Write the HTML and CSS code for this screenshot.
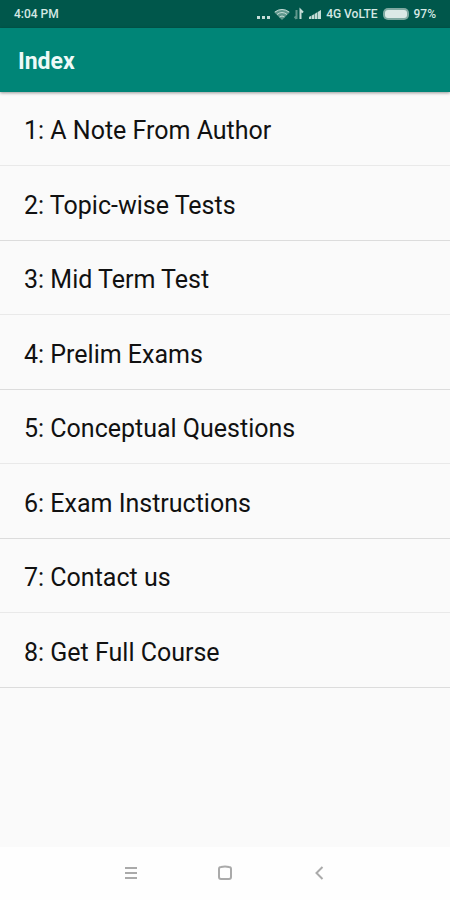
FILE: index.html
```html
<!DOCTYPE html>
<html lang="en">
<head>
    <meta charset="UTF-8">
    <meta name="viewport" content="width=device-width, initial-scale=1.0">
    <title>Index</title>
    <link rel="stylesheet" href="styles.css">
</head>
<body>
    <div class="status-bar">
        <span class="time">4:04 PM</span>
        <div class="status-icons">
            <svg class="dots" width="14" height="14" viewBox="0 0 14 14">
                <path d="M1 9h3v3H1zM6 9h3v3H6zM11 9h3v3h-3z"/>
            </svg>
            <svg class="wifi" width="16" height="14" viewBox="0 0 16 14">
                <path class="fan" d="M0 5Q8-1 16 5L8 13z"/>
                <path class="waves" d="M1 5q7-5 14 0M3 7.500q5-4 10 0M5.500 10q2.500-2 5 0"/>
            </svg>
            <svg class="data" width="10" height="14" viewBox="0 0 10 14">
                <path class="down" d="M2.500 3v9M2.500 12L0.500 9.500"/>
                <path class="up" d="M6.500 12V3L9 5.500"/>
            </svg>
            <svg class="signal" width="14" height="14" viewBox="0 0 14 14">
                <path class="wedge" d="M1 12V10L13 3v9z"/>
                <path d="M1 12V10l2-1v3zM4 12V8.500l2-1V12zM7 12V7l2-1.500V12zM10 12V5l3-2v9z"/>
            </svg>
            <span class="network">4G VoLTE</span>
            <svg class="battery" width="28" height="14" viewBox="0 0 28 14">
                <rect class="case" x="1" y="1" width="26" height="12" rx="5"/>
                <rect class="charge" x="3" y="3" width="22" height="8" rx="3"/>
            </svg>
            <span>97%</span>
        </div>
    </div>

    <header class="app-bar">
        <h1>Index</h1>
    </header>

    <main>
        <ul class="index-list">
            <li><a href="#author">1: A Note From Author</a></li>
            <li><a href="#topics">2: Topic-wise Tests</a></li>
            <li><a href="#midterm">3: Mid Term Test</a></li>
            <li><a href="#prelim">4: Prelim Exams</a></li>
            <li><a href="#conceptual">5: Conceptual Questions</a></li>
            <li><a href="#instructions">6: Exam Instructions</a></li>
            <li><a href="#contact">7: Contact us</a></li>
            <li><a href="#course">8: Get Full Course</a></li>
        </ul>
    </main>

    <nav class="nav-bar">
        <button type="button" aria-label="Menu">
            <svg width="16" height="16" viewBox="0 0 16 16"><path d="M2 3h12M2 8h12M2 13h12"/></svg>
        </button>
        <button type="button" aria-label="Home">
            <svg width="16" height="16" viewBox="0 0 16 16"><path d="M4 2Q8 1 12 2Q14 2 14 4V12Q14 14 12 14H4Q2 14 2 12V4Q2 2 4 2Z"/></svg>
        </button>
        <button type="button" aria-label="Back">
            <svg width="16" height="16" viewBox="0 0 16 16"><path d="M11.500 2L5.500 8l6 6"/></svg>
        </button>
    </nav>
</body>
</html>
```
FILE: styles.css
```css
* {
    box-sizing: border-box;
}
body {
    margin: 0;
    min-height: 100vh;
    display: flex;
    flex-direction: column;
    font-family: Roboto, sans-serif;
    background-color: #fafafa;
    color: #111;
}
.status-bar {
    display: flex;
    justify-content: space-between;
    align-items: center;
    height: 28px;
    padding: 0 14px;
    background-color: #00574b;
    color: #d5e8e4;
    font-size: 12px;
    font-weight: 500;
}
.status-icons {
    display: flex;
    align-items: center;
    gap: 4px;
}
.status-icons svg {
    fill: #c5dcd7;
}
.status-icons .fan,
.status-icons .wedge {
    fill: #5f978c;
}
.status-icons .waves {
    fill: none;
    stroke: #c5dcd7;
    stroke-width: 1;
}
.status-icons .data {
    fill: none;
    stroke-width: 2;
}
.down {
    stroke: #5f978c;
}
.up {
    stroke: #c5dcd7;
}
.status-icons .case {
    fill: #7fa9a1;
}
.status-icons .charge {
    fill: #dce9e6;
}
.app-bar {
    display: flex;
    align-items: center;
    height: 64px;
    padding: 2px 18px 0;
    background-color: #008577;
    color: #eefaf8;
    box-shadow: 0 1px 3px rgba(0, 0, 0, 0.4);
}
.app-bar h1 {
    margin: 0;
    font-size: 23px;
    font-weight: 700;
}
main {
    flex: 1;
}
.index-list {
    margin: 0;
    padding: 0;
    list-style: none;
}
.index-list a {
    display: flex;
    align-items: center;
    height: 74px;
    padding: 4px 24px 0;
    border-bottom: 1px solid #e9e9e9;
    color: inherit;
    font-size: 25px;
    text-decoration: none;
}
.index-list li:nth-child(even) a {
    height: 75px;
    border-bottom-color: #dcdcdc;
}
.nav-bar {
    display: flex;
    justify-content: center;
    align-items: center;
    gap: 62px;
    height: 53px;
    padding-bottom: 2px;
    background-color: #fefefe;
}
.nav-bar button {
    display: flex;
    justify-content: center;
    width: 32px;
    padding: 8px 0;
    border: none;
    background: none;
    cursor: pointer;
}
.nav-bar svg {
    fill: none;
    stroke: #aaa;
    stroke-width: 2;
}
```
